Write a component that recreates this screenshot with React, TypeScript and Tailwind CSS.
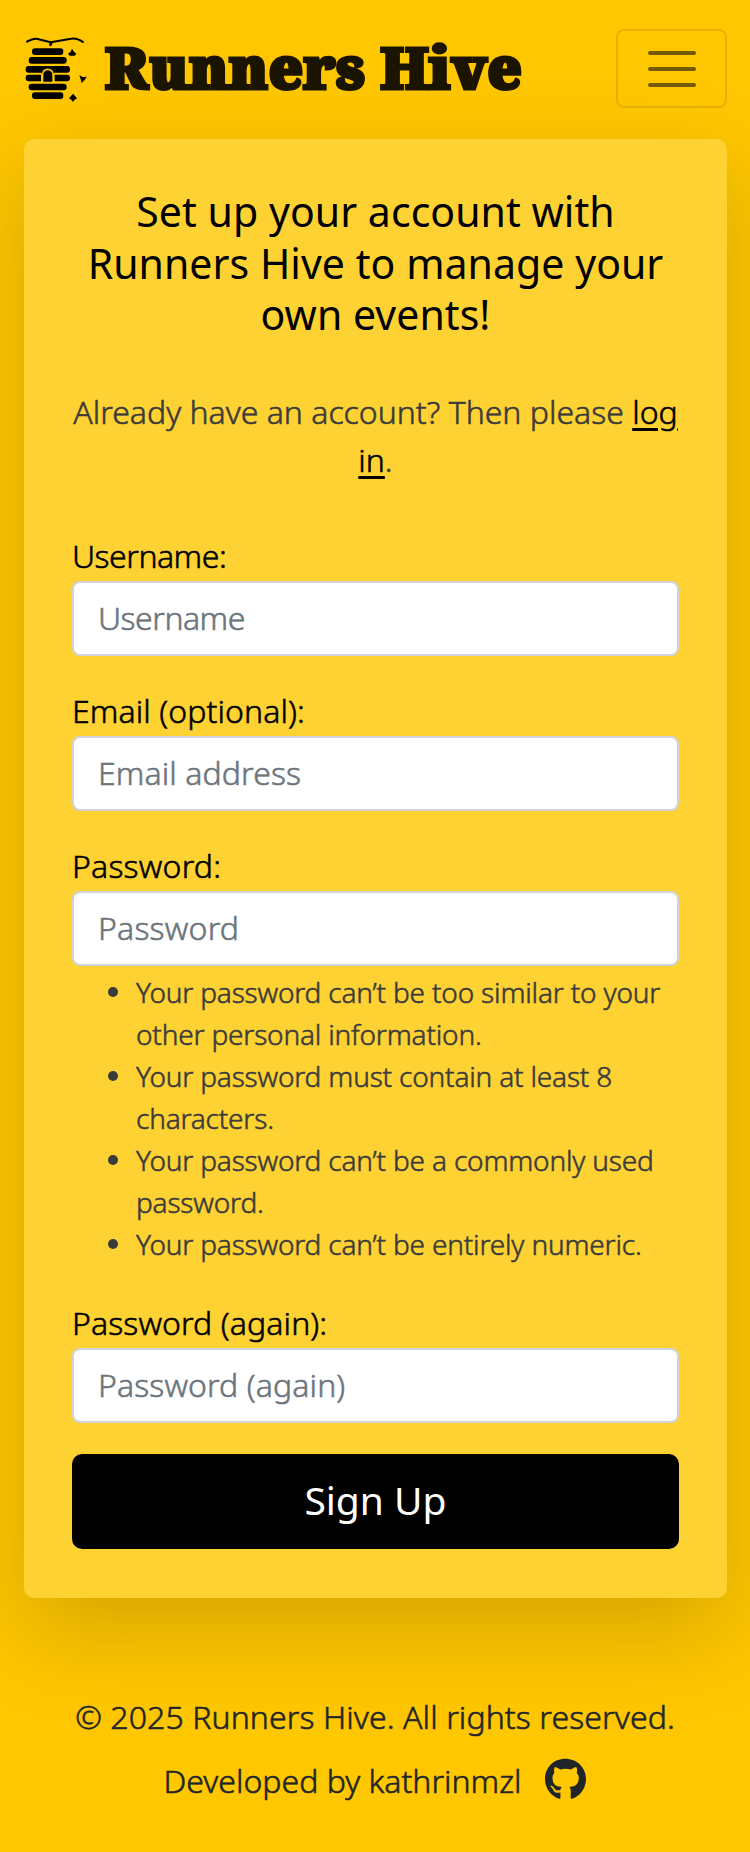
import React from 'react';
import { FaGithub } from 'react-icons/fa';

function HiveLogo() {
  return (
    <svg viewBox="0 0 255 255" className="h-[85px] w-[85px] shrink-0" aria-hidden="true">
      <path d="M36 50 C45 45 56 39 68 42 L107 52 L168 41 C182 38 194 44 204 51" fill="none" stroke="#000" strokeWidth="6" strokeLinejoin="round" strokeLinecap="round" />
      <path d="M110 50 L105 62" stroke="#000" strokeWidth="8" />
      <g fill="#000">
        <rect x="51" y="70" width="94" height="20" rx="9" />
        <rect x="41" y="96" width="114" height="20" rx="9" />
        <rect x="32" y="123" width="133" height="20" rx="9" />
        <rect x="32" y="149" width="133" height="20" rx="9" />
        <rect x="41" y="176" width="114" height="20" rx="9" />
        <rect x="51" y="202" width="94" height="20" rx="9" />
      </g>
      <path d="M78 171 V149 C78 122 119 122 119 149 V171 Z" fill="#ffc700" />
      <path d="M80 145 C82 124 115 124 117 145" fill="none" stroke="#000" strokeWidth="3" />
      <path d="M85 170 V149 C85 131 112 131 112 149 V170 Z" fill="#000" />
      <g fill="#000">
        <path d="M171 71 L177 80 L184 86 L179 92 H164 L159 86 L167 80 Z" />
        <path d="M193 150 L202 156 L215 155 L209 165 L200 174 L197 163 Z" />
        <path d="M174 206 L180 213 L186 220 L179 224 L174 231 L169 224 L162 220 L168 213 Z" />
      </g>
    </svg>
  );
}

interface FieldProps {
  label: string;
  placeholder: string;
  type?: string;
  tracking?: string;
}

function Field({ label, placeholder, type = 'text', tracking = 'tracking-[0.2px]' }: FieldProps) {
  return (
    <label className={`block leading-[48px] text-black ${tracking}`}>
      {label}
      <input
        type={type}
        placeholder={placeholder}
        className={`mt-[1.4px] block h-[74.6px] w-full rounded-lg border-2 border-[#ced4da] bg-white px-6 pb-[2px] placeholder:text-[#6c757d] placeholder:opacity-100 ${tracking}`}
      />
    </label>
  );
}

const rules = [
  'Your password can’t be too similar to your other personal information.',
  'Your password must contain at least 8 characters.',
  'Your password can’t be a commonly used password.',
  'Your password can’t be entirely numeric.',
];

export default function App() {
  return (
    <div className="min-h-[1852px] w-full overflow-hidden bg-[#ffc700] font-['Noto_Sans',sans-serif] text-[32px] font-light text-[#212529] [-webkit-text-stroke:0.55px_currentColor]">
      <header className="flex h-[138.7px] items-start justify-between pr-[23px] pl-[15px]">
        <div className="flex items-start pt-[25px]">
          <HiveLogo />
          <h1 className="pt-[2px] pl-[5px] font-['Noto_Serif',serif] text-[58px] leading-[80px] font-black tracking-[0.1px] whitespace-nowrap text-[#1a1400] [-webkit-text-stroke:3px_#1a1400]">
            Runners Hive
          </h1>
        </div>
        <button
          aria-label="Toggle navigation"
          className="mt-[29px] flex h-[79px] w-[111px] flex-col items-center justify-center gap-3 rounded-lg border-2 border-black/10"
        >
          <span className="h-1 w-12 rounded-full bg-black/55" />
          <span className="h-1 w-12 rounded-full bg-black/55" />
          <span className="h-1 w-12 rounded-full bg-black/55" />
        </button>
      </header>

      <main className="mr-[23px] ml-6 h-[1459px] rounded-[10px] bg-[#ffd233] px-12 pt-[47.8px] shadow-[0_32px_96px_rgba(0,0,0,0.175)]">
        <h2 className="text-center text-[41px] leading-[51.2px] font-normal tracking-[0.05px] text-black [-webkit-text-stroke:0]">
          Set up your account with<br />Runners Hive to manage your<br />own events!
        </h2>
        <p className="mt-[48.4px] text-center leading-[48px] text-[#3b3b3b]">
          Already have an account? Then please{' '}
          <a href="#" className="text-black underline decoration-[3px] underline-offset-[4px]">log<br />in</a>.
        </p>
        <form className="mt-[47.6px]">
          <div className="flex flex-col gap-[30.8px]">
            <Field label="Username:" placeholder="Username" tracking="tracking-[-0.5px]" />
            <Field label="Email (optional):" placeholder="Email address" type="email" tracking="tracking-[0.1px]" />
            <Field label="Password:" placeholder="Password" type="password" />
          </div>
          <ul className="mt-[5.7px] mb-[33.5px] flex flex-col pl-[36px] text-[28px] leading-[42px] tracking-[-0.18px] text-[#3b3b3b]">
            {rules.map((rule) => (
              <li key={rule} className="flex">
                <span className="mt-[16px] mr-[18px] size-[10px] shrink-0 rounded-full bg-[#3b3b3b]" />
                <span>{rule}</span>
              </li>
            ))}
          </ul>
          <Field label="Password (again):" placeholder="Password (again)" type="password" tracking="tracking-[0.1px]" />
          <button
            type="button"
            className="mt-[31.4px] block h-[95px] w-full rounded-[10px] bg-black pb-[2px] text-[39px] font-normal text-white [-webkit-text-stroke:0]"
          >
            Sign Up
          </button>
        </form>
      </main>

      <footer className="mt-[95px] flex flex-col items-center text-[#212529]">
        <p className="leading-[48px] tracking-[0.1px]">© 2025 Runners Hive. All rights reserved.</p>
        <div className="mt-4 flex items-start leading-[48px]">
          <span>Developed by kathrinmzl</span>
          <FaGithub className="mt-[1px] ml-6 h-[42.5px] w-[41px] [stroke-width:0]" />
        </div>
      </footer>
    </div>
  );
}
